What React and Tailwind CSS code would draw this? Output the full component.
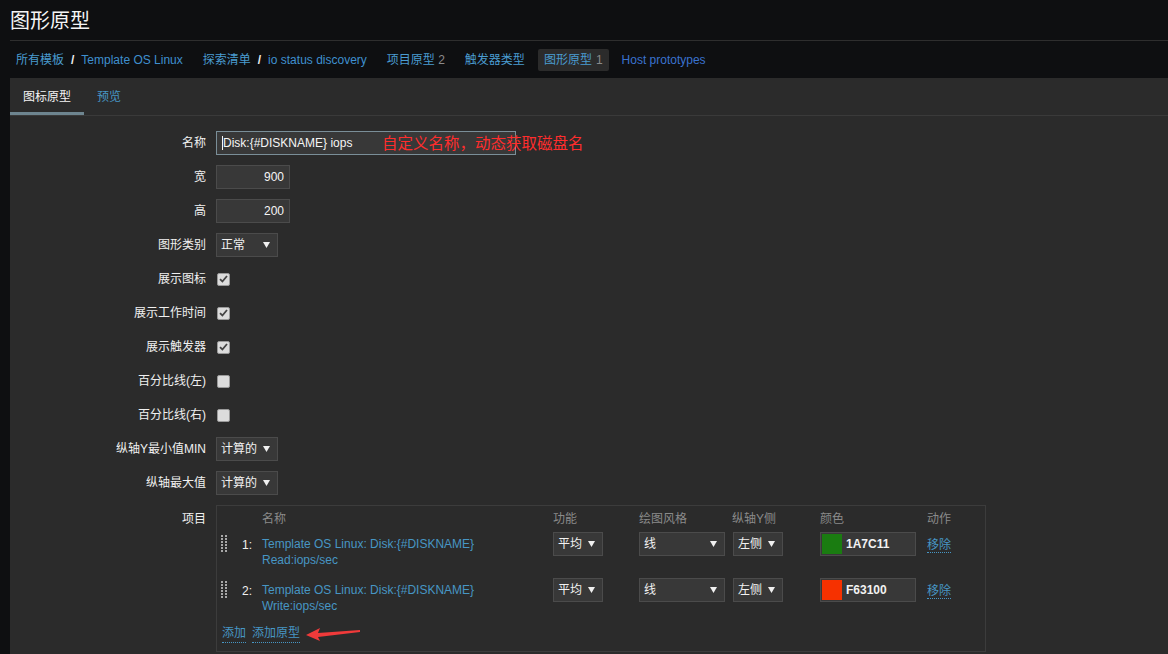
import React from "react";

const font = { fontFamily: '"Liberation Sans", "Noto Sans CJK SC", sans-serif' };

function Arrow() {
  return (
    <svg width="7" height="6" viewBox="0 0 7 6" className="shrink-0">
      <polygon points="0,0 7,0 3.5,6" fill="#f0f0f0" />
    </svg>
  );
}

function Select({ value, width }) {
  return (
    <div
      className={`flex h-[24px] items-center justify-between border border-[#4b4b4b] bg-[#383838] pl-[4px] pr-[7px] text-[12px] text-[#f2f2f2] ${width}`}
    >
      <span>{value}</span>
      <Arrow />
    </div>
  );
}

function CheckBox({ checked }) {
  return (
    <div className="flex h-[13px] w-[13px] items-center justify-center rounded-[2px] border border-[#9a9a9a] bg-[#dcdcdc]">
      {checked && (
        <svg width="9" height="8" viewBox="0 0 9 8">
          <path d="M1 4.2 L3.4 6.5 L8 1" stroke="#444" strokeWidth="1.8" fill="none" />
        </svg>
      )}
    </div>
  );
}

function Row({ label, children }) {
  return (
    <div className="flex h-[24px] items-center">
      <div className="w-[206px] pr-[10px] text-right text-[12px] text-[#f0f0f0]">{label}</div>
      <div className="flex items-center">{children}</div>
    </div>
  );
}

function Handle() {
  const dots = [];
  for (let r = 0; r < 6; r++) {
    dots.push(<rect key={`a${r}`} x="0" y={r * 3} width="2" height="2" fill="#a8a8a8" />);
    dots.push(<rect key={`b${r}`} x="4" y={r * 3} width="2" height="2" fill="#a8a8a8" />);
  }
  return (
    <svg width="6" height="18" viewBox="0 0 6 18">
      {dots}
    </svg>
  );
}

function ItemRow({ num, line1, line2, color, hex }) {
  return (
    <div className="flex h-[46px] items-start text-[12px]">
      <div className="w-[21px] pl-[4px] pt-[3px]">
        <Handle />
      </div>
      <div className="w-[24px] pt-[4px] pl-[4px] text-[#f0f0f0]">{num}:</div>
      <div className="w-[291px] pt-[4px] leading-[16px] text-[#4796c4]">
        <div>{line1}</div>
        <div>{line2}</div>
      </div>
      <div className="w-[86px]">
        <Select value="平均" width="w-[50px]" />
      </div>
      <div className="w-[94px]">
        <Select value="线" width="w-[86px]" />
      </div>
      <div className="w-[87px]">
        <Select value="左侧" width="w-[50px]" />
      </div>
      <div className="w-[107px]">
        <div className="flex h-[24px] w-[96px] items-center border border-[#4b4b4b] bg-[#383838] pl-[1px]">
          <div className={`h-[20px] w-[20px] ${color}`} />
          <span className="ml-[4px] text-[12px] font-bold text-[#f2f2f2]">{hex}</span>
        </div>
      </div>
      <div className="pt-[4px]">
        <span className="border-b border-dotted border-[#4796c4] text-[#4796c4]">移除</span>
      </div>
    </div>
  );
}

export default function App() {
  const crumbs = (
    <div className="flex h-[37px] items-center text-[12px]">
      <span className="ml-[6px] text-[#4a9cd0]">所有模板</span>
      <span className="mx-[7px] font-bold text-[#f0f0f0]">/</span>
      <span className="text-[#3f8fcf]">Template OS Linux</span>
      <span className="ml-[20px] text-[#4a9cd0]">探索清单</span>
      <span className="mx-[7px] font-bold text-[#f0f0f0]">/</span>
      <span className="text-[#3f8fcf]">io status discovery</span>
      <span className="ml-[20px] text-[#4a9cd0]">
        项目原型 <span className="text-[#8a8a8a]">2</span>
      </span>
      <span className="ml-[20px] text-[#4a9cd0]">触发器类型</span>
      <span className="ml-[13px] flex h-[22px] items-center rounded-[2px] bg-[#2b2b2b] px-[6px] text-[#4a9cd0]">
        图形原型 <span className="ml-[4px] text-[#8a8a8a]">1</span>
      </span>
      <span className="ml-[13px] text-[#3a72cf]">Host prototypes</span>
    </div>
  );

  return (
    <div className="flex min-h-[654px] flex-col bg-[#0e0f11]" style={font}>
      <div className="flex h-[40px] items-center pl-[10px] pt-[2px] text-[20px] text-[#f5f5f5]">图形原型</div>
      <div className="ml-[10px] border-t border-[#2e2e2e]">{crumbs}</div>
      <div className="ml-[10px] flex flex-1 flex-col bg-[#2b2b2b]">
        <div className="flex h-[38px] items-stretch border-b border-[#3a3a3a] text-[12px]">
          <div className="flex w-[74px] items-center justify-center border-b-[3px] border-[#6e8590] pt-[3px] text-[#f5f5f5]">
            图标原型
          </div>
          <div className="ml-[13px] flex items-center text-[#4796c4]">预览</div>
        </div>
        <div className="flex flex-col gap-[10px] pt-[15px]">
          <Row label="名称">
            <div className="relative">
              <div className="flex h-[24px] w-[300px] items-center border border-[#7a8e98] bg-[#383838] pl-[5px] text-[12px] text-[#f5f5f5]">
                <span className="h-[14px] w-[1px] bg-[#f5f5f5]" />
                Disk:{"{#DISKNAME}"} iops
              </div>
              <div className="absolute left-[166px] top-[1px] whitespace-nowrap text-[15.5px] text-[#ff2d2d]">
                自定义名称，动态获取磁盘名
              </div>
            </div>
          </Row>
          <Row label="宽">
            <div className="flex h-[24px] w-[74px] items-center justify-end border border-[#4b4b4b] bg-[#383838] pr-[5px] text-[12px] text-[#f5f5f5]">
              900
            </div>
          </Row>
          <Row label="高">
            <div className="flex h-[24px] w-[74px] items-center justify-end border border-[#4b4b4b] bg-[#383838] pr-[5px] text-[12px] text-[#f5f5f5]">
              200
            </div>
          </Row>
          <Row label="图形类别">
            <Select value="正常" width="w-[62px]" />
          </Row>
          <Row label="展示图标">
            <div className="pl-[1px]"><CheckBox checked /></div>
          </Row>
          <Row label="展示工作时间">
            <div className="pl-[1px]"><CheckBox checked /></div>
          </Row>
          <Row label="展示触发器">
            <div className="pl-[1px]"><CheckBox checked /></div>
          </Row>
          <Row label="百分比线(左)">
            <div className="pl-[1px]"><CheckBox /></div>
          </Row>
          <Row label="百分比线(右)">
            <div className="pl-[1px]"><CheckBox /></div>
          </Row>
          <Row label="纵轴Y最小值MIN">
            <Select value="计算的" width="w-[62px]" />
          </Row>
          <Row label="纵轴最大值">
            <Select value="计算的" width="w-[62px]" />
          </Row>
          <div className="flex items-start">
            <div className="w-[206px] pr-[10px] pt-[5px] text-right text-[12px] text-[#f0f0f0]">项目</div>
            <div className="w-[770px] border border-[#3c3c3c] pb-[8px] pt-[5px]">
              <div className="flex h-[16px] items-center text-[12px] text-[#8a8a8a]">
                <div className="w-[45px]" />
                <div className="w-[291px]">名称</div>
                <div className="w-[86px]">功能</div>
                <div className="w-[93px]">绘图风格</div>
                <div className="w-[88px]">纵轴Y侧</div>
                <div className="w-[107px]">颜色</div>
                <div>动作</div>
              </div>
              <div className="mt-[5px]">
                <ItemRow
                  num="1"
                  line1="Template OS Linux: Disk:{#DISKNAME}"
                  line2="Read:iops/sec"
                  color="bg-[#1a7c11]"
                  hex="1A7C11"
                />
                <ItemRow
                  num="2"
                  line1="Template OS Linux: Disk:{#DISKNAME}"
                  line2="Write:iops/sec"
                  color="bg-[#f63100]"
                  hex="F63100"
                />
              </div>
              <div className="flex items-center pl-[5px] text-[12px] text-[#4796c4]">
                <span className="border-b border-dotted border-[#4796c4]">添加</span>
                <span className="ml-[6px] border-b border-dotted border-[#4796c4]">添加原型</span>
                <svg width="58" height="14" viewBox="0 0 58 14" className="ml-[6px]">
                  <polygon points="0,8 14,1 12,6 54,3 54,5 12,10 14,14" fill="#f03a3a" />
                </svg>
              </div>
            </div>
          </div>
        </div>
      </div>
    </div>
  );
}
